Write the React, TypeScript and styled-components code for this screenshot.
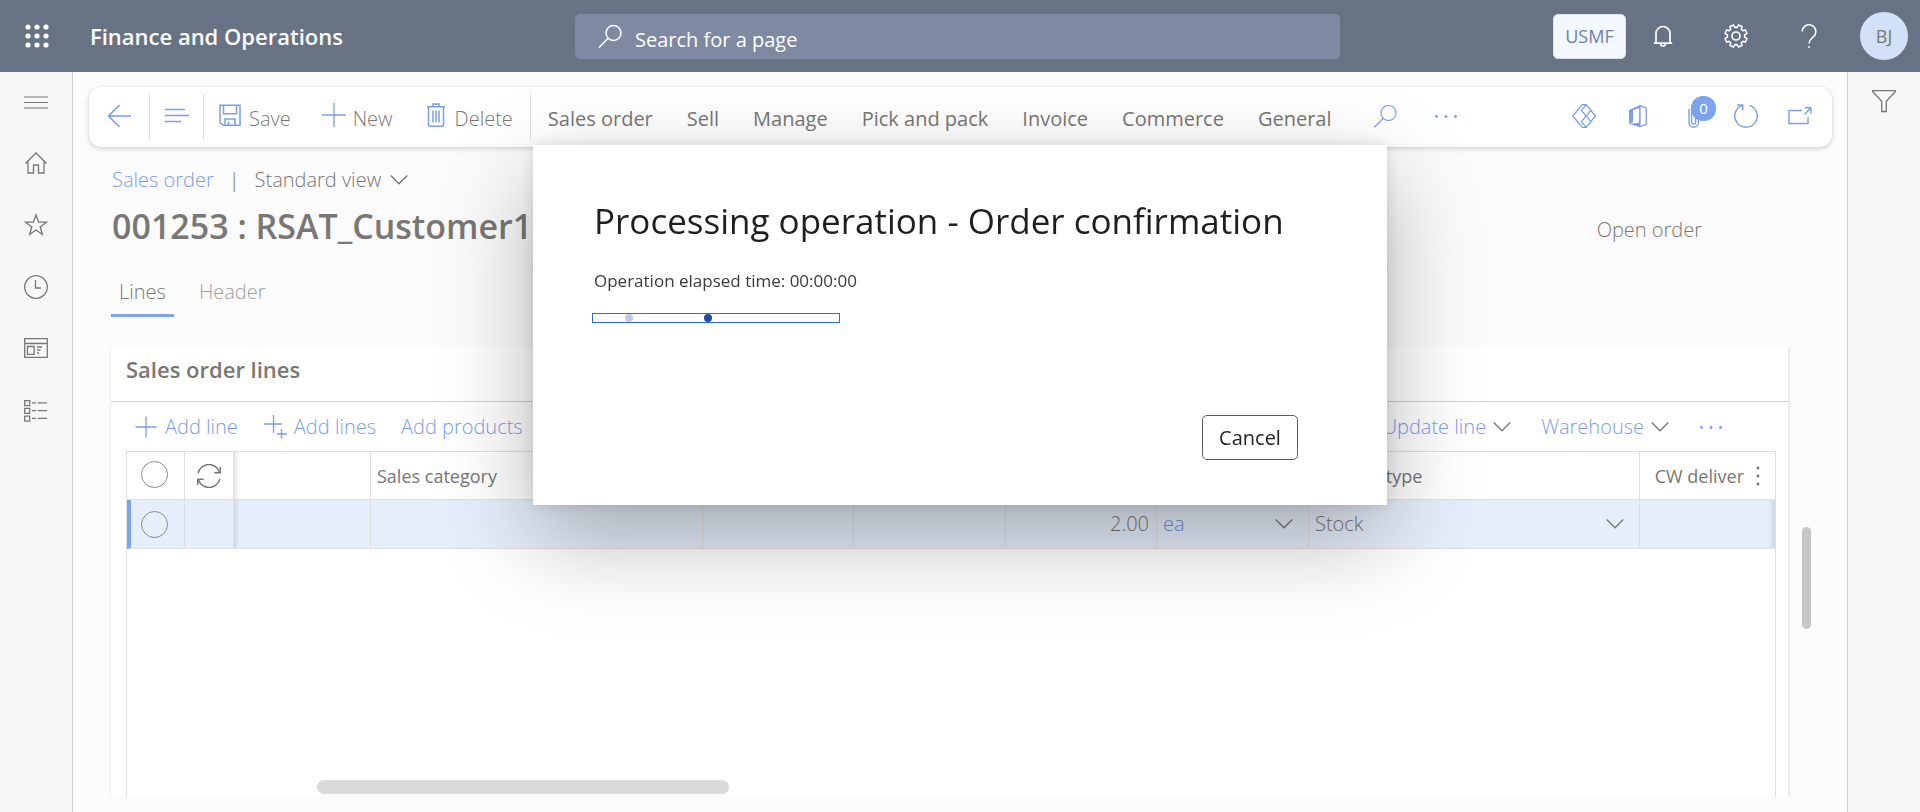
import React from 'react';
import styled, { createGlobalStyle, css } from 'styled-components';

const color = {
  header: '#677285',
  search: '#7d8aa2',
  text: '#797775',
  muted: '#a19f9d',
  link: '#7b9eea',
  accent: '#7ba3ee',
  line: '#e1dfdd',
  page: '#fbfbfb',
  rail: '#f7f7f7',
  railLine: '#d2d0ce',
  selected: '#e7eefb',
};

const GlobalStyle = createGlobalStyle`
  *, *::before, *::after { box-sizing: border-box; }
  html, body { margin: 0; height: 100%; }
  body {
    font-family: 'Open Sans', 'Noto Sans', sans-serif;
    font-size: 20px;
    font-weight: 300;
    line-height: 26px;
    color: ${color.text};
    background: ${color.page};
    overflow: hidden;
  }
  button, input { font: inherit; color: inherit; }
  h1, h2, p { margin: 0; }
`;

const Page = styled.div`
  height: 100vh;
  display: flex;
  flex-direction: column;
`;

const plainButton = css`
  display: flex;
  align-items: center;
  justify-content: center;
  padding: 0;
  border: 0;
  background: none;
  white-space: nowrap;
  cursor: pointer;
`;

/* Header */

const Header = styled.header`
  flex: none;
  height: 72px;
  display: flex;
  align-items: center;
  background: ${color.header};
  color: #fff;
`;

const HeaderSide = styled.div<{ $end?: boolean }>`
  flex: 1;
  display: flex;
  align-items: center;
  justify-content: ${(p) => (p.$end ? 'flex-end' : 'flex-start')};
`;

const HeaderButton = styled.button`
  ${plainButton}
  width: 73px;
  height: 72px;
`;

const Brand = styled.span`
  margin-left: 17px;
  font-size: 22px;
  font-weight: 600;
  white-space: nowrap;
`;

const SearchBox = styled.label`
  flex: 0 1 765px;
  height: 45px;
  display: flex;
  align-items: center;
  gap: 13px;
  margin-right: 5px;
  padding: 0 23px;
  border-radius: 5px;
  background: ${color.search};
`;

const SearchInput = styled.input`
  flex: 1;
  min-width: 0;
  padding: 8px 0 0;
  border: 0;
  outline: 0;
  background: none;
  font-weight: 400;
  &::placeholder { color: #fff; opacity: 1; }
`;

const Company = styled.button`
  ${plainButton}
  width: 73px;
  height: 45px;
  border: 1px solid #d6e3fa;
  border-radius: 5px;
  background: #f3f7fe;
  color: #6f80ab;
  font-size: 18px;
  font-weight: 400;
`;

const Avatar = styled.button`
  ${plainButton}
  width: 48px;
  height: 48px;
  margin: 0 12px 0 15px;
  border-radius: 50%;
  background: #d3e1f8;
  color: ${color.text};
  font-size: 18px;
  font-weight: 400;
`;

/* Body frame */

const Body = styled.div`
  flex: 1;
  min-height: 0;
  display: flex;
`;

const Rail = styled.nav<{ $right?: boolean }>`
  flex: none;
  width: 73px;
  display: flex;
  flex-direction: column;
  align-items: center;
  gap: 38px;
  padding-top: 17px;
  background: ${color.rail};
  border: solid ${color.railLine};
  border-width: ${(p) => (p.$right ? '0 0 0 1px' : '0 1px 0 0')};
`;

const RailButton = styled.button`
  ${plainButton}
  width: 48px;
  height: 24px;
`;

const Main = styled.main`
  flex: 1;
  min-width: 0;
  display: flex;
  flex-direction: column;
  padding: 15px 15px 15px 16px;
`;

/* Action pane */

const ActionPane = styled.div`
  flex: none;
  height: 60px;
  display: flex;
  align-items: center;
  padding-right: 5px;
  border-radius: 12px;
  background: #fff;
  box-shadow: 0 2px 5px rgba(0, 0, 0, 0.14), 0 0 2px rgba(0, 0, 0, 0.12);
`;

const Divider = styled.span`
  width: 1px;
  height: 46px;
  background: ${color.line};
`;

const IconButton = styled.button<{ $width: number }>`
  ${plainButton}
  position: relative;
  width: ${(p) => p.$width}px;
  height: 60px;
  padding-bottom: 2px;
  color: ${color.link};
`;

const Command = styled.button`
  ${plainButton}
  height: 60px;
  gap: 7px;
  padding: 0 17px 0 14px;
  svg { color: ${color.link}; margin-bottom: 4px; }
  span { padding-top: 4px; }
`;

const PaneTab = styled.button`
  ${plainButton}
  height: 60px;
  padding: 4px 17px 0;
  font-weight: 400;
`;

const Spacer = styled.div<{ $size?: number }>`
  flex: ${(p) => (p.$size ? 'none' : '1')};
  width: ${(p) => (p.$size ? `${p.$size}px` : 'auto')};
`;

const Badge = styled.span`
  position: absolute;
  left: 26px;
  top: 9px;
  width: 25px;
  height: 25px;
  border-radius: 12px;
  background: ${color.accent};
  color: #fff;
  font-size: 15px;
  font-weight: 400;
  line-height: 25px;
  text-align: center;
`;

/* Form heading */

const Form = styled.div`
  flex: 1;
  min-height: 0;
  display: flex;
  flex-direction: column;
  padding: 20px 45px 0 22px;
`;

const Crumbs = styled.div`
  display: flex;
  align-items: center;
  gap: 15px;
  padding-left: 1px;
`;

const CrumbLink = styled.a`
  color: ${color.link};
  text-decoration: none;
`;

const ViewButton = styled.button`
  ${plainButton}
  gap: 9px;
`;

const TitleRow = styled.div`
  display: flex;
  align-items: center;
  justify-content: space-between;
  height: 66px;
  padding: 0 85px 0 1px;
`;

const Title = styled.h1`
  font-size: 34px;
  line-height: 44px;
  font-weight: 600;
  white-space: nowrap;
`;

const Status = styled.span`
  padding-top: 7px;
`;

const Tabs = styled.div`
  display: flex;
  gap: 17px;
  margin-top: 12px;
`;

const Tab = styled.button<{ $active?: boolean }>`
  ${plainButton}
  height: 46px;
  padding: 0 8px 1px;
  border-bottom: 3px solid ${(p) => (p.$active ? color.accent : 'transparent')};
  color: ${(p) => (p.$active ? color.text : color.muted)};
`;

/* Lines card */

const CardRow = styled.div`
  flex: 1;
  min-height: 0;
  display: flex;
  margin-right: -24px;
`;

const Card = styled.section`
  flex: 1;
  min-width: 0;
  margin-top: 30px;
  display: flex;
  flex-direction: column;
  background: #fff;
  box-shadow: -1px 0 0 #eeedec, 1px 0 3px rgba(0, 0, 0, 0.12);
  clip-path: inset(0 -6px);
`;

const CardHead = styled.div`
  height: 55px;
  padding: 8px 15px 0;
  border-bottom: 1px solid ${color.railLine};
`;

const CardTitle = styled.h2`
  font-size: 22px;
  line-height: 28px;
  font-weight: 600;
`;

const Toolbar = styled.div`
  height: 49px;
  display: flex;
  align-items: center;
  justify-content: space-between;
  padding: 0 65px 0 23px;
  color: ${color.link};
`;

const ToolGroup = styled.div<{ $gap: number }>`
  display: flex;
  align-items: center;
  gap: ${(p) => p.$gap}px;
`;

const ToolButton = styled.button`
  ${plainButton}
  gap: 7px;
`;

const Caret = styled.span`
  display: flex;
  color: ${color.text};
`;

const GridFrame = styled.div`
  flex: 1;
  min-height: 0;
  display: flex;
  flex-direction: column;
  justify-content: space-between;
  margin: 0 12px 0 15px;
  border: 1px solid ${color.line};
  border-bottom: 0;
`;

const Table = styled.table`
  width: 100%;
  table-layout: fixed;
  border-collapse: separate;
  border-spacing: 0;
`;

const HeadCell = styled.th`
  height: 48px;
  padding: 0 7px 0 6px;
  border-right: 1px solid ${color.line};
  border-bottom: 1px solid ${color.line};
  font-size: 18px;
  font-weight: 400;
  line-height: 24px;
  text-align: left;
  white-space: nowrap;
  overflow: hidden;
  &:last-child { border-right: 0; }
`;

const FrozenEdge = styled(HeadCell)`
  box-shadow: inset 6px 0 5px -4px #dddddd;
`;

const Cell = styled.td<{ $shade?: 'left' | 'right'; $number?: boolean }>`
  height: 49px;
  padding: 0 7px 1px 6px;
  border-right: 1px solid ${color.line};
  border-bottom: 1px solid ${color.line};
  background: ${color.selected};
  text-align: ${(p) => (p.$number ? 'right' : 'left')};
  box-shadow: ${(p) =>
    p.$shade === 'right' ? 'inset -6px 0 5px -3px #ccd4e3' : p.$shade === 'left' ? 'inset 6px 0 5px -4px #ccd0d8' : 'none'};
  &:first-child { border-left: 4px solid ${color.accent}; }
  &:last-child { border-right: 0; }
`;

const CellRow = styled.div<{ $end?: boolean }>`
  display: flex;
  align-items: center;
  justify-content: ${(p) => (p.$end ? 'flex-end' : 'space-between')};
  gap: 12px;
  padding-right: 8px;
`;

const CellIcon = styled.div`
  display: flex;
  justify-content: center;
`;

const SelectCircle = styled.input<{ $head?: boolean }>`
  appearance: none;
  display: block;
  width: 27px;
  height: 27px;
  margin: ${(p) => (p.$head ? '0 9px 2px auto' : '2px 9px 0 auto')};
  border: 1px solid #8a8886;
  border-radius: 50%;
`;

const CellLink = styled.a`
  color: #6f8fd6;
  text-decoration: none;
`;

const HorizontalThumb = styled.div`
  width: 25%;
  height: 14px;
  margin: 0 0 3px 190px;
  border-radius: 7px;
  background: #dadada;
`;

const VerticalTrack = styled.div`
  flex: none;
  width: 23px;
  padding: 210px 0 0 14px;
`;

const VerticalThumb = styled.div`
  width: 9px;
  height: 102px;
  border-radius: 5px;
  background: #c8c6c4;
`;

/* Dialog */

const Overlay = styled.div`
  position: fixed;
  inset: 0;
  display: flex;
  justify-content: center;
  align-items: flex-start;
  padding-top: 145px;
`;

const Dialog = styled.div`
  width: 854px;
  min-height: 360px;
  display: flex;
  flex-direction: column;
  padding: 52px 89px 45px 61px;
  background: #fff;
  color: #201f1e;
  box-shadow: 0 33px 88px rgba(0, 0, 0, 0.29), 0 0 14px rgba(0, 0, 0, 0.12);
`;

const DialogTitle = styled.h2`
  font-size: 35px;
  line-height: 48px;
  font-weight: 500;
  white-space: nowrap;
`;

const Elapsed = styled.p`
  margin-top: 24px;
  font-size: 17px;
  font-weight: 400;
  line-height: 24px;
  color: #3b3a39;
`;

const Progress = styled.div`
  display: flex;
  align-items: center;
  width: 248px;
  height: 10px;
  margin: 20px 0 0 -2px;
  padding-left: 32px;
  gap: 71px;
  border: 1px solid #2f6bdb;
`;

const Dot = styled.span<{ $faded?: boolean }>`
  width: 8px;
  height: 8px;
  border-radius: 50%;
  background: ${(p) => (p.$faded ? '#bccbe9' : '#194db0')};
`;

const Cancel = styled.button`
  ${plainButton}
  align-self: flex-end;
  width: 96px;
  height: 45px;
  margin-top: auto;
  border: 1px solid #605e5c;
  border-radius: 5px;
  background: #fff;
  font-weight: 500;
`;

/* Icons */

const Svg = ({ children, w = 24, h = 24, sw = 1.3 }: { children: React.ReactNode; w?: number; h?: number; sw?: number }) => (
  <svg width={w} height={h} viewBox={`0 0 ${w} ${h}`} fill="none" stroke="currentColor" strokeWidth={sw} aria-hidden="true">
    {children}
  </svg>
);

const Waffle = () => (
  <Svg>
    {[3, 12, 21].map((y) => [3, 12, 21].map((x) => <circle key={`${x}-${y}`} cx={x} cy={y} r="2.6" fill="currentColor" stroke="none" />))}
  </Svg>
);

const Magnifier = ({ sw = 1.5 }: { sw?: number }) => (
  <Svg sw={sw}>
    <circle cx="15.5" cy="9" r="7.5" />
    <path d="M10.2 14.3 1 23.5" />
  </Svg>
);

const Bell = () => (
  <Svg sw={1.7}>
    <path d="M2.8 19.2h18.4M5 19V9.5a7 7 0 0 1 14 0V19M9.5 19.5a2.5 2.5 0 0 0 5 0" />
  </Svg>
);

const gearPath = (() => {
  const points: string[] = [];
  for (let i = 0; i < 8; i++) {
    const mid = (i * 45 + 22.5) * (Math.PI / 180);
    [[-0.27, 8.7], [-0.17, 11.2], [0.17, 11.2], [0.27, 8.7]].forEach(([a, r]) => {
      points.push(`${(12 + r * Math.cos(mid + a)).toFixed(2)} ${(12 + r * Math.sin(mid + a)).toFixed(2)}`);
    });
  }
  return `M${points.join('L')}Z`;
})();

const Gear = () => (
  <Svg sw={1.6}>
    <path d={gearPath} strokeLinejoin="round" />
    <circle cx="12" cy="12" r="4" />
  </Svg>
);

const Question = () => (
  <Svg sw={1.6}>
    <path d="M5.2 7.6a6.8 6.8 0 1 1 11.4 5C14 15 12 16 12 19.5" />
    <circle cx="12" cy="23" r="1" fill="currentColor" stroke="none" />
  </Svg>
);

const Menu = () => (
  <Svg sw={1.1}><path d="M0 8h24M0 13.5h24M0 19h24" /></Svg>
);

const Home = () => (
  <Svg><path d="M1.5 12.5 12 2l10.5 10.5M4 10.5V22h5.5v-8h5v8H20V10.5" /></Svg>
);

const Star = () => (
  <Svg><path d="m12 2 2.6 7.2h7.7l-6.1 4.7 2.2 7.6L12 17l-6.4 4.5 2.2-7.6-6.1-4.7h7.7z" /></Svg>
);

const Clock = () => (
  <Svg><circle cx="12" cy="12" r="11.3" /><path d="M11.5 5v8H17" /></Svg>
);

const Workspace = () => (
  <Svg>
    <path d="M.7 1.7h22.6v18.6H.7zM.7 6.5h22.6M3.5 9.5h6.6v7.8H3.5zM13 10h5M13 13h3.5M13 16h2" />
  </Svg>
);

const Modules = () => (
  <Svg>
    {[1.7, 9.4, 17.2].map((y) => <path key={y} d={`M.7 ${y}h5v5h-5zM8 ${y + 2.2}h4M13.5 ${y + 2.2}H23`} />)}
  </Svg>
);

const Funnel = () => (
  <Svg><path d="M.7 1.7h22.6v1.1L14.3 12.3v10.2H9.7V12.3L.7 2.8z" /></Svg>
);

const Back = () => (
  <Svg sw={1.6}><path d="M24 12H1.5M12.5 1 1.5 12l11 11" /></Svg>
);

const ShowList = () => (
  <Svg sw={1.6}><path d="M0 5.5h20M0 11.5h24M0 17.5h16" /></Svg>
);

const Save = () => (
  <Svg sw={1.5}>
    <path d="M2 2.2h20v20H5L2 19.7zM5.5 2.2v8.6h13V2.2M7 22v-6h10v6M10.5 22v-3.5" />
  </Svg>
);

const Plus = () => (
  <Svg><path d="M12 0v24M0 12h24" /></Svg>
);

const Trash = () => (
  <Svg sw={1.5}>
    <path d="M3 3.7h18M9 3.5V1h6v2.5M4.5 3.7v18.5l1 1h13l1-1V3.7M9 7.5v12M12 7.5v12M15 7.5v12" />
  </Svg>
);

const Dots = () => (
  <Svg>
    {[2.5, 12, 21.5].map((x) => <circle key={x} cx={x} cy="12.5" r="1.4" fill="currentColor" stroke="none" />)}
  </Svg>
);

const PowerApps = () => (
  <Svg>
    <path d="M10.2.7.8 12l9.4 11.3h4L23.4 12 14.2.7zM14.2.7 9.4 6.4 19 17.6M14.2 23.3l-4.8-5.7L19 6.4" strokeLinejoin="round" />
  </Svg>
);

const Office = () => (
  <Svg>
    <path d="M3 6 14 1v3L7 6v12l-4 2z" fill="currentColor" stroke="none" />
    <path d="m3 20 11-1.5V23z" fill="currentColor" stroke="none" />
    <path d="M13.8 1.7 20.3 4v16.5l-6.5 2zM14 4.5v15" />
  </Svg>
);

const Clip = () => (
  <Svg sw={1.4}>
    <path d="M9 5v13.5a4.7 4.7 0 0 0 9.4 0V4a3.4 3.4 0 0 0-6.8 0v14a2 2 0 0 0 4 0V6" />
  </Svg>
);

const Refresh = () => (
  <Svg sw={1.4}>
    <path d="M8.5 1.4A11.2 11.2 0 1 0 15.5 1.4M3 1h5.7v5.6" />
  </Svg>
);

const PopOut = () => (
  <Svg sw={1.4}>
    <path d="M14 6.5H1v13h19V13M16.5 10.5l6.2-6.5M17 3.8h6v6" />
  </Svg>
);

const Chevron = () => (
  <Svg w={18} h={12}><path d="m.7 1.5 8.3 8.3 8.3-8.3" /></Svg>
);

const AddLines = () => (
  <Svg>
    <path d="M10.5 0v18M1 9h18M18.5 14v10M14 19h10" />
  </Svg>
);

const SmallPlus = () => (
  <Svg><path d="M12 1.5v21M1.5 12h21" /></Svg>
);

const Sync = () => (
  <Svg sw={1.5}>
    <path d="M1 9.3A11.2 11.2 0 0 1 22.5 8M23.3 3v5.7h-6M23 14.7A11.2 11.2 0 0 1 1.5 16M.7 21v-5.7h6" />
  </Svg>
);

const Kebab = () => (
  <Svg w={4} h={22}>
    {[3, 11, 19].map((y) => <circle key={y} cx="2" cy={y} r="1.5" fill="currentColor" stroke="none" />)}
  </Svg>
);

/* Page content */

const paneTabs = ['Sales order', 'Sell', 'Manage', 'Pick and pack', 'Invoice', 'Commerce', 'General'];

const railItems = [
  { label: 'Expand the navigation pane', icon: <Menu /> },
  { label: 'Home', icon: <Home /> },
  { label: 'Favorites', icon: <Star /> },
  { label: 'Recent', icon: <Clock /> },
  { label: 'Workspaces', icon: <Workspace /> },
  { label: 'Modules', icon: <Modules /> },
];

const columnWidths = [58, 49, 137, 332, 151, 152, 151, 152, 331];

export default function App() {
  return (
    <Page>
      <GlobalStyle />
      <Header>
        <HeaderSide>
          <HeaderButton aria-label="App launcher"><Waffle /></HeaderButton>
          <Brand>Finance and Operations</Brand>
        </HeaderSide>
        <SearchBox>
          <Magnifier />
          <SearchInput type="text" placeholder="Search for a page" aria-label="Search for a page" />
        </SearchBox>
        <HeaderSide $end>
          <Company>USMF</Company>
          <HeaderButton aria-label="Notifications"><Bell /></HeaderButton>
          <HeaderButton aria-label="Settings"><Gear /></HeaderButton>
          <HeaderButton aria-label="Help"><Question /></HeaderButton>
          <Avatar>BJ</Avatar>
        </HeaderSide>
      </Header>

      <Body>
        <Rail aria-label="Navigation">
          {railItems.map((item) => (
            <RailButton key={item.label} aria-label={item.label}>{item.icon}</RailButton>
          ))}
        </Rail>

        <Main>
          <ActionPane>
            <IconButton $width={60} aria-label="Back"><Back /></IconButton>
            <Divider />
            <IconButton $width={53} aria-label="Show list"><ShowList /></IconButton>
            <Divider />
            <Command><Save /><span>Save</span></Command>
            <Command><Plus /><span>New</span></Command>
            <Command><Trash /><span>Delete</span></Command>
            <Divider />
            {paneTabs.map((tab) => <PaneTab key={tab}>{tab}</PaneTab>)}
            <Spacer $size={6} />
            <IconButton $width={61} aria-label="Search actions"><Magnifier sw={1.2} /></IconButton>
            <IconButton $width={61} aria-label="More actions"><Dots /></IconButton>
            <Spacer />
            <IconButton $width={54} aria-label="Power Apps"><PowerApps /></IconButton>
            <IconButton $width={54} aria-label="Open in Microsoft Office"><Office /></IconButton>
            <IconButton $width={54} aria-label="Attachments"><Clip /><Badge>0</Badge></IconButton>
            <IconButton $width={54} aria-label="Refresh"><Refresh /></IconButton>
            <IconButton $width={54} aria-label="Open in new window"><PopOut /></IconButton>
          </ActionPane>

          <Form>
            <Crumbs>
              <CrumbLink href="#">Sales order</CrumbLink>
              <span>|</span>
              <ViewButton>Standard view<Chevron /></ViewButton>
            </Crumbs>
            <TitleRow>
              <Title>001253 : RSAT_Customer16</Title>
              <Status>Open order</Status>
            </TitleRow>
            <Tabs role="tablist">
              <Tab role="tab" aria-selected="true" $active>Lines</Tab>
              <Tab role="tab" aria-selected="false">Header</Tab>
            </Tabs>

            <CardRow>
              <Card>
                <CardHead><CardTitle>Sales order lines</CardTitle></CardHead>
                <Toolbar>
                  <ToolGroup $gap={25}>
                    <ToolButton><SmallPlus />Add line</ToolButton>
                    <ToolButton><AddLines />Add lines</ToolButton>
                    <ToolButton>Add products</ToolButton>
                  </ToolGroup>
                  <ToolGroup $gap={30}>
                    <ToolButton>Update line<Caret><Chevron /></Caret></ToolButton>
                    <ToolButton>Warehouse<Caret><Chevron /></Caret></ToolButton>
                    <ToolButton aria-label="More line actions"><Dots /></ToolButton>
                  </ToolGroup>
                </Toolbar>
                <GridFrame>
                  <Table>
                    <colgroup>
                      {columnWidths.map((width, i) => <col key={i} style={{ width }} />)}
                      <col />
                    </colgroup>
                    <thead>
                      <tr>
                        <HeadCell><SelectCircle $head type="checkbox" aria-label="Select all rows" /></HeadCell>
                        <HeadCell><CellIcon><Sync /></CellIcon></HeadCell>
                        <FrozenEdge />
                        <HeadCell>Sales category</HeadCell>
                        <HeadCell />
                        <HeadCell />
                        <HeadCell />
                        <HeadCell />
                        <HeadCell>Product type</HeadCell>
                        <HeadCell><CellRow $end><span>CW deliver</span><Kebab /></CellRow></HeadCell>
                      </tr>
                    </thead>
                    <tbody>
                      <tr>
                        <Cell><SelectCircle type="checkbox" aria-label="Select row" /></Cell>
                        <Cell />
                        <Cell $shade="left" />
                        <Cell />
                        <Cell />
                        <Cell />
                        <Cell $number>2.00</Cell>
                        <Cell><CellRow><CellLink href="#">ea</CellLink><Chevron /></CellRow></Cell>
                        <Cell><CellRow>Stock<Chevron /></CellRow></Cell>
                        <Cell $shade="right" />
                      </tr>
                    </tbody>
                  </Table>
                  <HorizontalThumb />
                </GridFrame>
              </Card>
              <VerticalTrack><VerticalThumb /></VerticalTrack>
            </CardRow>
          </Form>
        </Main>

        <Rail $right aria-label="Filter pane">
          <RailButton aria-label="Show filters"><Funnel /></RailButton>
        </Rail>
      </Body>

      <Overlay>
        <Dialog role="dialog" aria-modal="true" aria-labelledby="dialog-title">
          <DialogTitle id="dialog-title">Processing operation - Order confirmation</DialogTitle>
          <Elapsed>Operation elapsed time: 00:00:00</Elapsed>
          <Progress role="progressbar" aria-label="Processing">
            <Dot $faded />
            <Dot />
          </Progress>
          <Cancel>Cancel</Cancel>
        </Dialog>
      </Overlay>
    </Page>
  );
}
